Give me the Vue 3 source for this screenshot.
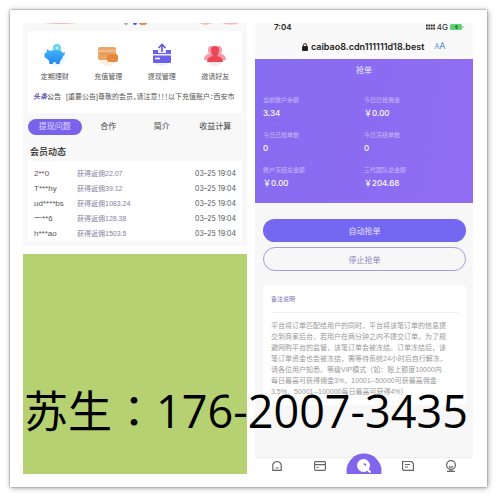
<script setup>
const shortcuts = [
  { id: 'save', label: '定期理财' },
  { id: 'recharge', label: '充值管理' },
  { id: 'withdraw', label: '提现管理' },
  { id: 'invite', label: '邀请好友' },
]
const tabs = ['提现问题', '合作', '简介', '收益计算']
const members = [
  { name: '2**0', gain: '获得返佣22.07' },
  { name: 'T***hy', gain: '获得返佣39.12' },
  { name: 'ud****bs', gain: '获得返佣1083.24' },
  { name: '一**6', gain: '获得返佣128.38' },
  { name: 'h***ao', gain: '获得返佣1503.5' },
]
const stats = [
  { label: '当前账户余额', value: '3.34' },
  { label: '今日已抢佣金', value: '￥0.00' },
  { label: '今日已抢单数', value: '0' },
  { label: '今日冻结单数', value: '0' },
  { label: '账户冻结总金额', value: '￥0.00' },
  { label: '三代团队总金额', value: '￥204.68' },
]
const notes = [
  '平台将订单匹配给用户的同时，平台将该笔订单的信息提',
  '交到商家后台，若用户在两分钟之内不提交订单，为了规',
  '避网购平台的监管，该笔订单会被冻结。订单冻结后，该',
  '笔订单资金也会被冻结，需等待系统24小时后自行解冻，',
  '请各位用户知悉。等级VIP模式（如：账上额度10000内',
  '每日最高可获得佣金3%，10001--50000可获最高佣金',
  '3.5%，50001--100000每日最高可获得4%）',
]
</script>

<template>
  <main class="page">
    <div class="sheet">
      <div class="left">
        <section class="home">
          <div class="banner">
            <svg width="100%" height="8" viewBox="0 0 224 8" preserveAspectRatio="none" aria-hidden="true">
              <path d="M20 0h34q-14 2-34 0z" fill="#f7b5b3" />
              <path d="M176 0h14l-8 2zM199 0h18q-8 3-18 0z" fill="#f8b9b5" />
              <circle cx="103" cy="0" r="2" fill="#aaa" />
              <circle cx="112" cy="0" r="2" fill="#5550d8" />
              <ellipse cx="120" cy="0" rx="4" ry="2" fill="#ee8156" />
            </svg>
          </div>
          <div class="home-card">
            <nav class="shortcuts">
              <a v-for="s in shortcuts" :key="s.id" href="#" class="shortcut">
                <svg v-if="s.id === 'save'" width="24" height="24" viewBox="0 0 24 24" aria-hidden="true">
                  <defs>
                    <linearGradient id="pig" x1="0" y1="0" x2="0" y2="1">
                      <stop offset="0" stop-color="#45b5f7" /><stop offset="1" stop-color="#2186ed" />
                    </linearGradient>
                  </defs>
                  <circle cx="13" cy="14" r="9" fill="#e5f5fd" />
                  <circle cx="14" cy="5" r="4" fill="#67d3ea" />
                  <circle cx="14" cy="5" r="1.5" fill="#b9eff5" />
                  <path d="M4 6l3 2q6-2 11 0l2 2 2-1q0 3-2 4-.5 3-3 5l-.5 3h-3l-1-2h-2l-1 2h-3l-.5-3.500-3-2.500-1.500-.500v-4l2-1z" fill="url(#pig)" />
                </svg>
                <svg v-else-if="s.id === 'recharge'" width="24" height="24" viewBox="0 0 24 24" aria-hidden="true">
                  <circle cx="12" cy="14" r="9" fill="#fdefe2" />
                  <rect x="2" y="4" width="18" height="13" rx="2" fill="#eaa567" />
                  <path d="M2 8h18" stroke="#f9d3a9" />
                  <path d="M5 11h6" stroke="#d98a48" />
                  <rect x="11" y="11" width="11" height="8" rx="2.500" fill="#e58a3c" />
                </svg>
                <svg v-else-if="s.id === 'withdraw'" width="24" height="24" viewBox="0 0 24 24" aria-hidden="true">
                  <circle cx="12" cy="14" r="9" fill="#f0edff" />
                  <path d="M3 7h5v3h8V7h5v4H3zM3 12.500h18V19q0 1-1 1H4q-1 0-1-1z" fill="#6a60e8" />
                  <path d="M12 9V2M8.500 5l3.500-3.500L15.500 5" fill="none" stroke="#6358dd" stroke-width="1.600" />
                  <path d="M5 15.500h5" stroke="#fff" stroke-width="1.500" />
                </svg>
                <svg v-else width="24" height="24" viewBox="0 0 24 24" aria-hidden="true">
                  <circle cx="12" cy="14" r="9" fill="#fde6e9" />
                  <g fill="#f49ba8">
                    <ellipse cx="8" cy="7" rx="3" ry="4" /><ellipse cx="16" cy="7" rx="3" ry="4" />
                    <path d="M1 17q0-5 5-6h12q5 1 5 6z" />
                  </g>
                  <path d="M12 3q4 0 4 4 0 4-2 6 6 1 6 6H4q0-5 6-6-2-2-2-6 0-4 4-4z" fill="#eb4658" />
                </svg>
                <span>{{ s.label }}</span>
              </a>
            </nav>
            <div class="notice">
              <strong><em>头条</em>公告</strong>
              <p>[重要公告]尊敬的会员，请注意！！！以下充值账户：西安市</p>
            </div>
          </div>
          <div class="tabs">
            <button v-for="(t, i) in tabs" :key="t" type="button" :class="{ active: i === 0 }">{{ t }}</button>
          </div>
          <h2>会员动态</h2>
          <div class="members">
            <table>
              <tbody>
                <tr v-for="m in members" :key="m.name">
                  <td class="name">{{ m.name }}</td>
                  <td class="gain">{{ m.gain }}</td>
                  <td class="date">03–25 19:04</td>
                </tr>
              </tbody>
            </table>
          </div>
        </section>
        <div class="green"></div>
      </div>

      <section class="phone">
        <header class="browser">
          <div class="status">
            <span class="time">7:04</span>
            <span class="signal">
              <svg width="9" height="6" viewBox="0 0 9 6" aria-hidden="true">
                <path d="M0 1.5h9M0 4.5h9" stroke="#333" stroke-width="2" stroke-dasharray="1.8 .6" />
              </svg>
              <span>4G</span>
              <svg width="14" height="6" viewBox="0 0 14 6" aria-hidden="true">
                <rect width="12" height="6" rx="1.5" fill="#5fd175" />
                <path d="M7 1L5 3h3L6 5" stroke="#285f35" fill="none" />
                <path d="M13 2v2" stroke="#aaa" />
              </svg>
            </span>
          </div>
          <div class="address">
            <svg width="6" height="8" viewBox="0 0 6 8" aria-hidden="true">
              <rect x="0" y="3" width="6" height="5" rx="1" fill="#222" />
              <path d="M1.3 3.5V2.4a1.7 1.7 0 013.4 0v1.1" fill="none" stroke="#222" />
            </svg>
            <span class="url">caibao8.cdn111111d18.best</span>
            <span class="zoom"><small>A</small>A</span>
          </div>
        </header>
        <div class="summary">
          <h1>抢单</h1>
          <dl>
            <div v-for="s in stats" :key="s.label">
              <dt>{{ s.label }}</dt>
              <dd>{{ s.value }}</dd>
            </div>
          </dl>
        </div>
        <div class="actions">
          <button type="button" class="primary">自动抢单</button>
          <button type="button" class="outline">停止抢单</button>
        </div>
        <article class="notes">
          <h3>备注说明</h3>
          <p><span v-for="n in notes" :key="n">{{ n }}</span></p>
        </article>
        <nav class="bottom">
          <a href="#" aria-label="首页">
            <svg width="12" height="12" viewBox="0 0 12 12">
              <path d="M1.800 10.400V4.500Q3 1.500 6 1.500T10.200 4.500V10.400zM4.500 8h3" />
            </svg>
          </a>
          <a href="#" aria-label="卡片">
            <svg width="12" height="12" viewBox="0 0 12 12">
              <rect x=".6" y="1.6" width="10.8" height="8.8" rx="1.2" /><path d="M1 4.6h10M2.5 7.5h2" />
            </svg>
          </a>
          <a href="#" aria-label="抢单" class="center">
            <svg width="36" height="36" viewBox="0 0 36 36">
              <circle cx="18" cy="18" r="17.5" class="disc" />
              <circle cx="17.5" cy="12.5" r="6.5" class="lens" />
              <path d="M18 10.5l2 2" class="mark" />
              <path d="M21.5 16.5l3 3" class="handle" />
            </svg>
          </a>
          <a href="#" aria-label="订单">
            <svg width="12" height="12" viewBox="0 0 12 12">
              <path d="M.6 1.5H9.4L11.4 3.5V10.4H2Q.6 10.4.6 9zM3 4.5h5M3 7h3" />
            </svg>
          </a>
          <a href="#" aria-label="我的">
            <svg width="12" height="12" viewBox="0 0 12 12">
              <circle cx="6" cy="5" r="4.4" /><path d="M4 6.500q2 1.500 4 0M5 9v2M7 9v2M2 11.300h8" />
            </svg>
          </a>
        </nav>
      </section>

      <p class="contact"><span class="han">苏生<span class="colon">：</span></span>176-2007-3435</p>
    </div>
  </main>
</template>

<style>
body {
  margin: 0;
  background: #fff;
}
</style>

<style scoped>
* {
  box-sizing: border-box;
}
.page {
  min-height: 100vh;
  padding: 10px;
  display: flex;
  font-family: "Liberation Sans", "Noto Sans CJK SC", sans-serif;
  color: #555;
}
h1, h2, h3, p, dl, dd {
  margin: 0;
}
a {
  text-decoration: none;
  color: inherit;
}
button {
  font-family: inherit;
  padding: 0;
  border: 0;
  background: none;
}
.sheet {
  position: relative;
  flex: 1;
  min-width: 0;
  display: grid;
  grid-template-columns: minmax(0, 224fr) minmax(0, 218fr);
  gap: 8px;
  padding: 13px 14px 13px 13px;
  background: #fff;
  box-shadow: 0 0 2px #777, 1px 1px 6px #aaa;
}
.left {
  display: flex;
  flex-direction: column;
  gap: 8px;
}
.home {
  padding: 0 5px 5px;
  background: #f8f8f8;
}
.banner {
  height: 8px;
  margin: 0 -5px;
}
.banner svg {
  display: block;
}
.home-card {
  height: 82px;
  padding-top: 12px;
  background: #fff;
  border-radius: 3px;
}
.shortcuts {
  display: grid;
  grid-template-columns: repeat(4, 1fr);
}
.shortcut {
  display: flex;
  flex-direction: column;
  align-items: center;
  gap: 5px;
  font-size: 7px;
  line-height: 10px;
  white-space: nowrap;
}
.notice {
  display: flex;
  align-items: center;
  gap: 5px;
  height: 12px;
  margin-top: 9px;
  padding-left: 5px;
  font-size: 7px;
  line-height: 12px;
  white-space: nowrap;
}
.notice strong {
  flex: none;
  font-weight: 500;
}
.notice em {
  color: #5a50b0;
  font-weight: 700;
}
.notice p {
  font-feature-settings: "halt";
}
.tabs {
  display: grid;
  grid-template-columns: repeat(4, 1fr);
  margin-top: 6px;
}
.tabs button {
  height: 16px;
  border-radius: 8px;
  font-size: 8px;
  line-height: 16px;
  color: #444;
}
.tabs .active {
  background: #7a62ec;
  color: #ddd8fb;
}
h2 {
  margin-top: 10px;
  padding-left: 2px;
  font-size: 9px;
  font-weight: 500;
  line-height: 14px;
  color: #222;
}
.members {
  margin-top: 2px;
  padding: 5px 6px 0;
  background: #fff;
}
table {
  width: 100%;
  border-collapse: collapse;
  table-layout: fixed;
}
td {
  height: 15px;
  padding: 0;
  font-size: 7px;
  line-height: 14px;
  white-space: nowrap;
}
.name {
  width: 43px;
  font-size: 8px;
}
.gain {
  color: #8581a0;
}
.date {
  width: 60px;
  font-family: Inter, sans-serif;
  text-align: right;
}
.green {
  flex: 1;
  background: #b5d171;
}
.phone {
  display: flex;
  flex-direction: column;
  overflow: hidden;
  background: #f7f7f7;
}
.browser {
  height: 36px;
  background: #f9f9f9;
  font-family: Inter, sans-serif;
  color: #222;
}
.status {
  display: flex;
  justify-content: space-between;
  padding: 0 9px 0 19px;
  font-size: 8px;
  line-height: 8px;
}
.time {
  font-weight: 600;
}
.signal {
  display: flex;
  align-items: center;
  gap: 2px;
}
.address {
  display: flex;
  align-items: center;
  gap: 3px;
  margin-top: 8px;
  padding-left: 47px;
  font-size: 9px;
  line-height: 14px;
}
.url {
  font-weight: 600;
}
.zoom {
  margin-left: 7px;
  color: #4a8bd6;
}
.zoom small {
  font-size: 7px;
}
.summary {
  height: 144px;
  padding: 5px 8px 0;
  background: linear-gradient(100deg, #866cf0, #906cf3);
  color: #fff;
}
h1 {
  font-size: 8px;
  font-weight: 400;
  line-height: 14px;
  text-align: center;
  color: #eee8ff;
}
dl {
  display: grid;
  grid-template-columns: 1fr 1fr;
  margin-top: 11px;
}
dl > div {
  height: 35px;
  padding-top: 6px;
  border-bottom: 1px solid #896ff0;
}
dl > div:nth-last-child(-n + 2) {
  border: 0;
}
dt {
  font-size: 6px;
  line-height: 10px;
  color: #c8b9fa;
}
dd {
  margin-top: 2px;
  font-family: Inter, "Noto Sans CJK SC", sans-serif;
  font-size: 8px;
  font-weight: 500;
  line-height: 12px;
}
.actions {
  display: flex;
  flex-direction: column;
  gap: 5px;
  padding: 16px 7px 0 8px;
}
.actions button {
  height: 23px;
  border-radius: 12px;
  font-size: 8px;
}
.actions .primary {
  background: #7568f0;
  color: #e6e2ff;
}
.actions .outline {
  height: 24px;
  border: 1px solid #a99be0;
  color: #8f84c4;
}
.notes {
  margin: 15px 7px 0 8px;
  padding: 7px 8px 8px;
  background: #fff;
}
h3 {
  padding-bottom: 7px;
  border-bottom: 1px solid #eee;
  font-size: 6px;
  font-weight: 400;
  line-height: 12px;
  color: #7d74b4;
}
.notes p {
  margin-top: 7px;
  font-size: 7px;
  line-height: 11px;
  color: #999;
}
.notes p span {
  display: block;
  white-space: nowrap;
}
.bottom {
  display: grid;
  grid-template-columns: repeat(5, 1fr);
  height: 17px;
  margin-top: auto;
  background: #fff;
  border-top: 1px solid #eee;
}
.bottom a {
  display: flex;
  justify-content: center;
  padding-top: 2px;
}
.bottom svg {
  flex: none;
  fill: none;
  stroke: #666;
  stroke-width: 1.2;
}
.bottom .center {
  margin-top: -5px;
  padding-top: 0;
}
.disc {
  fill: #8165ec;
  stroke: none;
}
.lens {
  fill: #fff;
  stroke: none;
}
.mark {
  stroke: #7160df;
  stroke-width: 1.5;
}
.handle {
  stroke: #fff;
  stroke-width: 2;
}
.contact {
  position: absolute;
  left: 14px;
  bottom: 48px;
  font-family: "Open Sans", sans-serif;
  font-size: 45px;
  font-weight: 400;
  line-height: 56px;
  white-space: nowrap;
  color: #000;
}
.han {
  font-family: "Noto Sans CJK SC", sans-serif;
  font-size: 44px;
}
.colon {
  font-family: "Noto Sans CJK TC", sans-serif;
}
</style>
